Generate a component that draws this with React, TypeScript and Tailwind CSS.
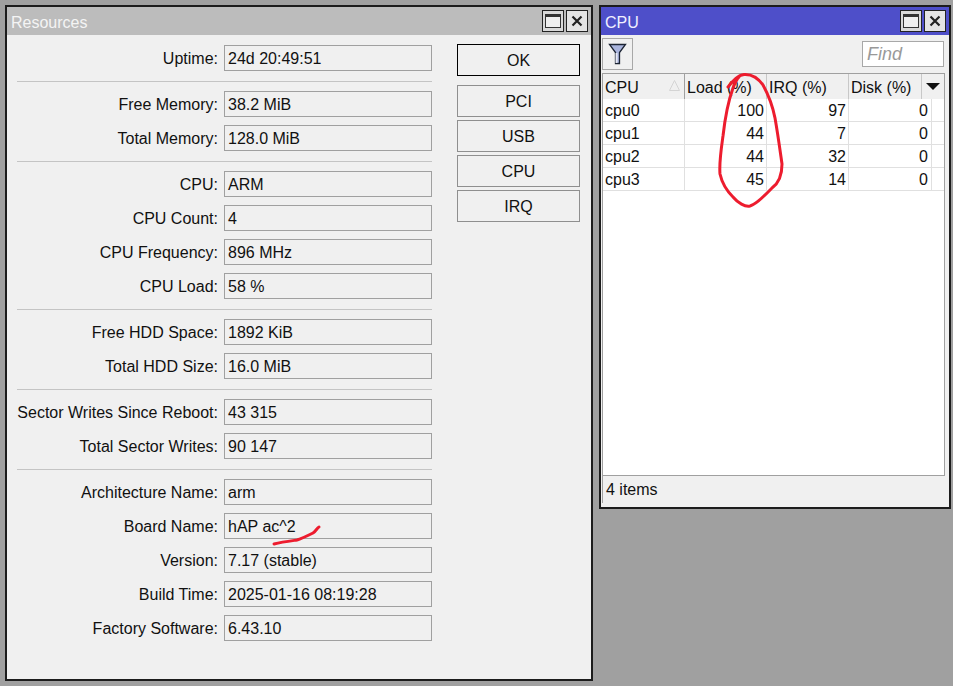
const font = { fontFamily: '"Liberation Sans", Arial, sans-serif' };

const groups = [
  [["Uptime", "24d 20:49:51"]],
  [
    ["Free Memory", "38.2 MiB"],
    ["Total Memory", "128.0 MiB"],
  ],
  [
    ["CPU", "ARM"],
    ["CPU Count", "4"],
    ["CPU Frequency", "896 MHz"],
    ["CPU Load", "58 %"],
  ],
  [
    ["Free HDD Space", "1892 KiB"],
    ["Total HDD Size", "16.0 MiB"],
  ],
  [
    ["Sector Writes Since Reboot", "43 315"],
    ["Total Sector Writes", "90 147"],
  ],
  [
    ["Architecture Name", "arm"],
    ["Board Name", "hAP ac^2"],
    ["Version", "7.17 (stable)"],
    ["Build Time", "2025-01-16 08:19:28"],
    ["Factory Software", "6.43.10"],
  ],
];

const cpuRows = [
  ["cpu0", "100", "97", "0"],
  ["cpu1", "44", "7", "0"],
  ["cpu2", "44", "32", "0"],
  ["cpu3", "45", "14", "0"],
];

function TitleButtons() {
  return (
    <div className="flex gap-[2px]">
      <div className="flex h-[22px] w-[22px] items-center justify-center border border-[#222] bg-[#d9d9d9]">
        <div className="h-[14px] w-[16px] border border-t-[3px] border-[#333] bg-[#efefef]" />
      </div>
      <div className="flex h-[22px] w-[22px] items-center justify-center border border-[#222] bg-[#e4e4e4]">
        <svg width="12" height="12" viewBox="0 0 12 12">
          <path d="M1.5 1.5l9 9M10.5 1.5l-9 9" stroke="#222" strokeWidth="2.2" />
        </svg>
      </div>
    </div>
  );
}

function Field({ label, value }: { label: string; value: string }) {
  return (
    <div className="flex h-[26px] items-center">
      <span className="w-[210px] pt-[1px] text-right text-[16px] whitespace-nowrap text-[#111]">{label}:</span>
      <div className="ml-[6px] flex h-[26px] w-[208px] items-center border border-[#a0a0a0] bg-[#f0f0f0] pt-[1px] pl-[3px] text-[16px] text-[#111]">
        {value}
      </div>
    </div>
  );
}

function SideButton({ label, primary }: { label: string; primary?: boolean }) {
  return (
    <div
      className={
        primary
          ? "flex h-[32px] w-[123px] items-center justify-center border border-black bg-[#f0f0f0] pt-[1px] text-[16px] text-[#111]"
          : "flex h-[32px] w-[123px] items-center justify-center border border-[#8f8f8f] bg-[#f0f0f0] pt-[1px] text-[16px] text-[#111]"
      }
    >
      {label}
    </div>
  );
}

function ResourcesWindow() {
  return (
    <div className="absolute top-[5px] left-[5px] flex h-[676px] w-[588px] flex-col border-2 border-[#1c1c1c] bg-[#f0f0f0]">
      <div className="flex h-[28px] shrink-0 items-center justify-between bg-[#bcbcbc] pr-[3px] pl-[4px]">
        <span className="mt-[3px] text-[16px] text-[#f4f4f4]">Resources</span>
        <TitleButtons />
      </div>
      <div className="flex pt-[10px] pl-[1px]">
        <div className="flex w-[424px] flex-col">
          {groups.map((group, i) => (
            <div key={i} className="flex flex-col">
              {i > 0 && <div className="mt-[10px] mb-[9px] ml-[9px] h-[1px] w-[415px] bg-[#c4c4c4]" />}
              <div className="flex flex-col gap-[8px]">
                {group.map(([label, value]) => (
                  <Field key={label} label={label} value={value} />
                ))}
              </div>
            </div>
          ))}
        </div>
        <div className="-mt-[1px] ml-[25px] flex flex-col gap-[3px]">
          <div className="mb-[6px]">
            <SideButton label="OK" primary />
          </div>
          <SideButton label="PCI" />
          <SideButton label="USB" />
          <SideButton label="CPU" />
          <SideButton label="IRQ" />
        </div>
      </div>
    </div>
  );
}

function CpuWindow() {
  return (
    <div className="absolute top-[5px] left-[599px] flex h-[504px] w-[352px] flex-col border-2 border-[#1c1c1c] bg-[#f0f0f0]">
      <div className="flex h-[28px] shrink-0 items-center justify-between bg-[#4e4fc9] pr-[3px] pl-[4px]">
        <span className="mt-[3px] text-[16px] text-[#f0f0ff]">CPU</span>
        <TitleButtons />
      </div>
      <div className="flex h-[38px] shrink-0 items-start justify-between pt-[3px] pr-[5px] pl-[1px]">
        <div className="flex h-[32px] w-[31px] items-center justify-center border border-[#a8a8a8] bg-[#f0f0f0]">
          <svg width="20" height="22" viewBox="0 0 20 22">
            <path d="M1.5 1.5h16l-6 8v11h-4v-11z" fill="#a9b4dd" stroke="#1c2433" strokeWidth="1.3" />
            <path d="M7.5 10h2v10h-2z" fill="#e6e9f5" />
          </svg>
        </div>
        <div className="mt-[3px] flex h-[26px] w-[82px] items-center border border-[#a8a8a8] bg-white pl-[4px] text-[18px] text-[#999] italic">
          Find
        </div>
      </div>
      <div className="mr-[4px] ml-[1px] flex h-[403px] shrink-0 flex-col border border-[#a0a0a0] bg-white">
        <div className="flex h-[25px] shrink-0 bg-[#f0f0f0] text-[16px] text-[#111]">
          <div className="relative w-[82px] border-r border-[#a0a0a0] pl-[2px] leading-[27px]">
            CPU
            <svg className="absolute top-[6px] right-[4px]" width="11" height="11" viewBox="0 0 11 11">
              <path d="M5.5 0.5L10.5 10.5H0.5z" fill="none" stroke="#d4d4d4" />
            </svg>
          </div>
          <div className="w-[82px] border-r border-[#c8c8c8] pl-[2px] leading-[27px]">Load (%)</div>
          <div className="w-[82px] border-r border-[#c8c8c8] pl-[2px] leading-[27px]">IRQ (%)</div>
          <div className="w-[73px] border-r border-[#c8c8c8] pl-[2px] leading-[27px]">Disk (%)</div>
          <div className="flex flex-1 items-center justify-center">
            <svg width="14" height="7" viewBox="0 0 14 7">
              <path d="M0 0h14L7 7z" fill="#111" />
            </svg>
          </div>
        </div>
        {cpuRows.map(([name, load, irq, disk]) => (
          <div key={name} className="flex h-[23px] shrink-0 border-b border-[#e0e0e0] text-[16px] leading-[23px] text-[#111]">
            <div className="w-[82px] border-r border-[#e0e0e0] pl-[2px]">{name}</div>
            <div className="w-[82px] border-r border-[#e0e0e0] pr-[2px] text-right">{load}</div>
            <div className="w-[82px] border-r border-[#e0e0e0] pr-[2px] text-right">{irq}</div>
            <div className="w-[83px] border-r border-[#e0e0e0] pr-[3px] text-right">{disk}</div>
          </div>
        ))}
      </div>
      <div className="ml-[1px] flex h-[27px] items-center border-l border-[#a0a0a0] pl-[3px] text-[16px] text-[#111]">4 items</div>
    </div>
  );
}

export default function App() {
  return (
    <div className="relative h-[686px] w-[953px] overflow-hidden bg-[#a0a0a0]" style={font}>
      <ResourcesWindow />
      <CpuWindow />
      {/* red marker scribbles drawn over the screenshot */}
      <svg className="pointer-events-none absolute top-0 left-0" width="953" height="686" viewBox="0 0 953 686" fill="none">
        <path
          d="M728 87C733 81 738 75 744 74.5C751 74 758 78 763 85C769 96 773 108 775 118C778 135 780 150 782 164C782 175 779 183 772 188C764 196 757 204 750 206C745 207 738 203 733 197C727 191 722 183 720 174C719 163 721 150 723 136C725 118 728 102 733 88C735 83 737 79 739 77"
          stroke="#ed1c2e"
          strokeWidth="3"
          strokeLinecap="round"
        />
        <path d="M274 544C282 542 290 541 297 540C303 538 309 535 313 533C316 531 317 528 319 527" stroke="#ed1c2e" strokeWidth="3" strokeLinecap="round" />
      </svg>
    </div>
  );
}
